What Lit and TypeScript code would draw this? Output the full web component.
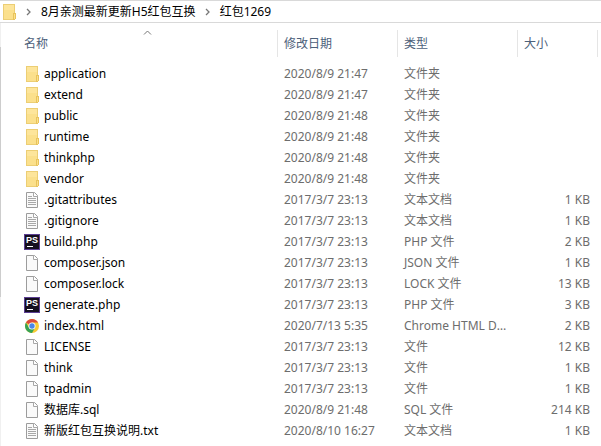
import { LitElement, html, css, svg } from "lit";
import { customElement, property } from "lit/decorators.js";

type IconKind = "folder" | "text" | "blank" | "php" | "chrome";

interface Entry {
  icon: IconKind;
  name: string;
  date: string;
  type: string;
  size: string;
}

const entry = (icon: IconKind, name: string, date: string, type: string, size = ""): Entry => ({
  icon, name, date, type, size,
});

const ENTRIES: Entry[] = [
  entry("folder", "application", "2020/8/9 21:47", "文件夹"),
  entry("folder", "extend", "2020/8/9 21:47", "文件夹"),
  entry("folder", "public", "2020/8/9 21:48", "文件夹"),
  entry("folder", "runtime", "2020/8/9 21:48", "文件夹"),
  entry("folder", "thinkphp", "2020/8/9 21:48", "文件夹"),
  entry("folder", "vendor", "2020/8/9 21:48", "文件夹"),
  entry("text", ".gitattributes", "2017/3/7 23:13", "文本文档", "1 KB"),
  entry("text", ".gitignore", "2017/3/7 23:13", "文本文档", "1 KB"),
  entry("php", "build.php", "2017/3/7 23:13", "PHP 文件", "2 KB"),
  entry("blank", "composer.json", "2017/3/7 23:13", "JSON 文件", "1 KB"),
  entry("blank", "composer.lock", "2017/3/7 23:13", "LOCK 文件", "13 KB"),
  entry("php", "generate.php", "2017/3/7 23:13", "PHP 文件", "3 KB"),
  entry("chrome", "index.html", "2020/7/13 5:35", "Chrome HTML Document", "2 KB"),
  entry("blank", "LICENSE", "2017/3/7 23:13", "文件", "12 KB"),
  entry("blank", "think", "2017/3/7 23:13", "文件", "1 KB"),
  entry("blank", "tpadmin", "2017/3/7 23:13", "文件", "1 KB"),
  entry("blank", "数据库.sql", "2020/8/9 21:48", "SQL 文件", "214 KB"),
  entry("text", "新版红包互换说明.txt", "2020/8/10 16:27", "文本文档", "1 KB"),
];

const page = svg`
  <path d="M2.500 .5h8l3 3v12h-11z" fill="#fafafa" stroke="#9c9c9c"/>
  <path d="M9.500 .5v4h4" fill="#fff" stroke="#a8a8a8"/>`;

const GLYPHS = {
  folder: svg`
    <path d="M2 0h12v16H2z" fill="#ecce74"/>
    <path d="M3 1h10v14H3z" fill="#fbe08c"/>
    <path d="M3 1h10v5H3z" fill="#fde59b"/>
    <path d="M12 9h3v6h-1v1h-2z" fill="#e8c35c"/>
    <path d="M13 10h1v5h-1z" fill="#fbe08c"/>`,
  blank: page,
  text: svg`${page}
    <path d="M4 4.500h4M4 6.500h8M4 8.500h8M4 10.500h8M4 12.500h8" stroke="#a8a8a8"/>`,
  php: svg`
    <path d="M0 0h16v16H0z" fill="#5b3e92"/>
    <path d="M1 1h14v14H1z" fill="#150f20"/>
    <text x="2" y="9" fill="#fff" font-family="Liberation Sans, sans-serif" font-size="9" font-weight="700">PS</text>
    <path d="M3 12h6v1H3z" fill="#fff"/>`,
  chrome: svg`
    <circle cx="8" cy="8" r="7" fill="#f7cb35"/>
    <path d="M8 8 1.940 4.500A7 7 0 0 1 14.060 4.500H8z" fill="#dc4a3d"/>
    <path d="M1.940 4.500A7 7 0 0 0 8 15l3-5.300L8 8 5 9.700z" fill="#37a355"/>
    <circle cx="8" cy="8" r="3.500" fill="#fff"/>
    <circle cx="8" cy="8" r="2.700" fill="#4a86e8"/>`,
};

@customElement("file-icon")
export class FileIcon extends LitElement {
  @property() kind: IconKind = "blank";

  static styles = css`
    :host { display: block; flex: none; width: 16px; height: 16px; }
    .glyph { display: block; }
  `;

  render() {
    return html`<svg class="glyph" width="16" height="16" viewBox="0 0 16 16" aria-hidden="true">${GLYPHS[this.kind]}</svg>`;
  }
}

@customElement("app-root")
export class AppRoot extends LitElement {
  static styles = css`
    :host {
      display: block;
      min-height: 100vh;
      background: #fff;
      color: #000;
      font: 12px/20px "Noto Sans", "Noto Sans CJK SC", sans-serif;
    }
    .window { display: flex; flex-direction: column; min-height: 100vh; }
    .address {
      display: flex;
      align-items: center;
      gap: 8px;
      height: 21px;
      padding-left: 1px;
      border-top: 1px solid #d9d9d9;
      border-bottom: 1px solid #d9d9d9;
    }
    .crumb { color: inherit; text-decoration: none; white-space: nowrap; }
    .chevron { flex: none; width: 8px; }
    .body { flex: 1; display: flex; }
    .edge { flex: none; width: 18px; display: flex; flex-direction: column; }
    .rest { width: 1px; height: 24px; background: #f0f0f0; }
    .thumb { width: 1px; height: 250px; background: #cdcdcd; }
    .tail { width: 1px; flex: 1; background: #f0f0f0; }
    .files { width: 100%; align-self: flex-start; table-layout: fixed; border-collapse: collapse; }
    .wide { width: 120px; }
    .narrow { width: 80px; }
    .end { width: 3px; }
    .head { padding: 7px 0 6px; font-weight: 400; text-align: left; color: #4c607a; }
    .label {
      position: relative;
      box-sizing: border-box;
      height: 27px;
      padding-left: 6px;
      border-right: 1px solid #e5e5e5;
      line-height: 27px;
    }
    .sort { position: absolute; top: 0; left: 50%; margin-left: -5px; }
    .cell {
      height: 21px;
      padding: 0 6px;
      color: #6d6d6d;
      white-space: nowrap;
      overflow: hidden;
      text-overflow: ellipsis;
    }
    .size { padding-right: 8px; text-align: right; }
    .name { display: flex; align-items: center; gap: 4px; color: #000; }
  `;

  private chevron() {
    return html`<svg class="chevron" width="8" height="8" viewBox="0 0 8 8" aria-hidden="true">
      <path d="M2 1l3 3-3 3" fill="none" stroke="#777" stroke-width="1.300" />
    </svg>`;
  }

  render() {
    return html`
      <div class="window">
        <nav class="address">
          <file-icon kind="folder"></file-icon>
          ${this.chevron()}
          <a class="crumb" href="#parent">8月亲测最新更新H5红包互换</a>
          ${this.chevron()}
          <a class="crumb" href="#current">红包1269</a>
        </nav>
        <main class="body">
          <div class="edge"><div class="rest"></div><div class="thumb"></div><div class="tail"></div></div>
          <table class="files">
            <colgroup>
              <col /><col class="wide" /><col class="wide" /><col class="narrow" /><col class="end" />
            </colgroup>
            <thead>
              <tr>
                <th class="head" aria-sort="ascending">
                  <div class="label">
                    名称
                    <svg class="sort" width="9" height="6" viewBox="0 0 9 6" aria-hidden="true">
                      <path d="M1 4.500l3.500-3.500L8 4.500" fill="none" stroke="#777" />
                    </svg>
                  </div>
                </th>
                <th class="head"><div class="label">修改日期</div></th>
                <th class="head"><div class="label">类型</div></th>
                <th class="head"><div class="label">大小</div></th>
                <td></td>
              </tr>
            </thead>
            <tbody>
              ${ENTRIES.map((e) => html`
                <tr>
                  <td class="cell"><div class="name"><file-icon kind=${e.icon}></file-icon>${e.name}</div></td>
                  <td class="cell">${e.date}</td>
                  <td class="cell">${e.type}</td>
                  <td class="cell size">${e.size}</td>
                  <td></td>
                </tr>`)}
            </tbody>
          </table>
        </main>
      </div>
    `;
  }
}
